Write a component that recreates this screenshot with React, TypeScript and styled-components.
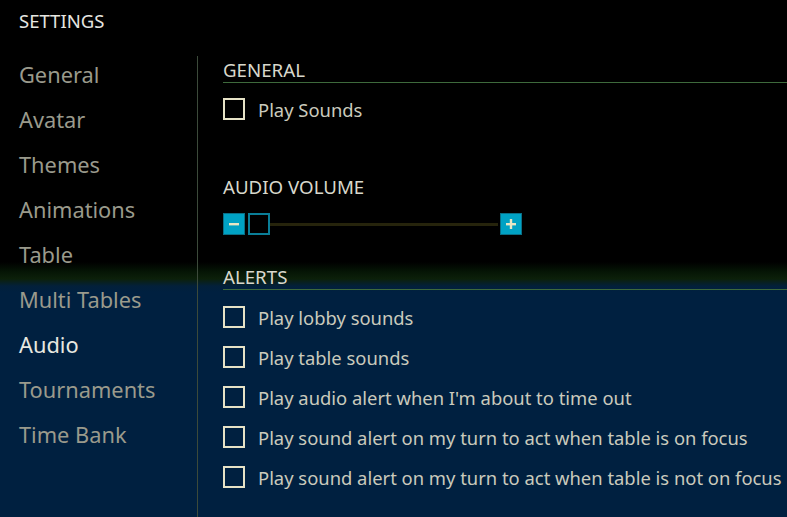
import React from "react";
import styled, { createGlobalStyle } from "styled-components";

const GlobalStyle = createGlobalStyle`
  html, body {
    margin: 0;
    padding: 0;
  }
  body {
    width: 787px;
    height: 517px;
    overflow: hidden;
    font-family: "Noto Sans", "Open Sans", sans-serif;
    background: linear-gradient(
      to bottom,
      #000000 0px,
      #000000 262px,
      #051405 271px,
      #0c200a 279px,
      #03203a 286px,
      #002040 292px,
      #002040 100%
    );
  }
`;

const Page = styled.div`
  display: flex;
  flex-direction: column;
  height: 517px;
`;

const Header = styled.div`
  height: 56px;
  padding: 9px 0 0 19px;
  box-sizing: border-box;
  color: #e6e6e0;
  font-size: 18.5px;
  line-height: 24px;
`;

const Body = styled.div`
  display: flex;
  flex: 1;
`;

const SidePanel = styled.nav`
  width: 197px;
  border-right: 1px solid #3c4a3a;
  display: flex;
  flex-direction: column;
`;

const NavItem = styled.div<{ $active?: boolean }>`
  height: 45px;
  line-height: 37px;
  padding-left: 19px;
  font-size: 21.8px;
  color: ${(p) => (p.$active ? "#e8e8e0" : "#9a9a8c")};
`;

const Content = styled.div`
  flex: 1;
  padding-left: 25px;
  display: flex;
  flex-direction: column;
`;

const SectionTitle = styled.div<{ $top: number; $line?: boolean }>`
  margin-top: ${(p) => p.$top}px;
  height: 24px;
  line-height: 24px;
  font-size: 18.7px;
  color: #d8d8cc;
  border-bottom: ${(p) => (p.$line ? "1px solid #3e6a3c" : "none")};
`;

const Row = styled.label`
  display: flex;
  align-items: center;
  height: 40px;
  gap: 13px;
  color: #cacabc;
  font-size: 18.4px;
`;

const Box = styled.span`
  width: 18px;
  height: 18px;
  border: 2px solid #e6e2c6;
  flex-shrink: 0;
`;

const List = styled.div<{ $top: number }>`
  margin-top: ${(p) => p.$top}px;
  display: flex;
  flex-direction: column;
`;

const Slider = styled.div`
  margin-top: 14px;
  display: flex;
  align-items: center;
  height: 22px;
`;

const StepButton = styled.div`
  width: 22px;
  height: 22px;
  box-sizing: border-box;
  background: #00a2c4;
  border: 1px solid #0a6f86;
  display: flex;
  align-items: center;
  justify-content: center;
`;

const Thumb = styled.div`
  width: 22px;
  height: 22px;
  box-sizing: border-box;
  margin-left: 3px;
  border: 2px solid #0a7e98;
  background: #000;
`;

const Track = styled.div`
  width: 228px;
  height: 3px;
  background: #26240c;
  margin-right: 2px;
`;

const Check = ({ label }: { label: string }) => (
  <Row>
    <Box />
    {label}
  </Row>
);

const navItems = [
  "General",
  "Avatar",
  "Themes",
  "Animations",
  "Table",
  "Multi Tables",
  "Audio",
  "Tournaments",
  "Time Bank",
];

const alerts = [
  "Play lobby sounds",
  "Play table sounds",
  "Play audio alert when I'm about to time out",
  "Play sound alert on my turn to act when table is on focus",
  "Play sound alert on my turn to act when table is not on focus",
];

export default function App() {
  return (
    <>
      <GlobalStyle />
      <Page>
        <Header>SETTINGS</Header>
        <Body>
          <SidePanel>
            {navItems.map((n) => (
              <NavItem key={n} $active={n === "Audio"}>
                {n}
              </NavItem>
            ))}
          </SidePanel>
          <Content>
            <SectionTitle $top={2} $line>
              GENERAL
            </SectionTitle>
            <List $top={6}>
              <Check label="Play Sounds" />
            </List>
            <SectionTitle $top={46}>AUDIO VOLUME</SectionTitle>
            <Slider>
              <StepButton>
                <svg width="10" height="10" viewBox="0 0 10 10">
                  <rect x="0" y="4" width="10" height="2.4" fill="#e8e6c4" />
                </svg>
              </StepButton>
              <Thumb />
              <Track />
              <StepButton>
                <svg width="10" height="10" viewBox="0 0 10 10">
                  <rect x="0" y="4" width="10" height="2.4" fill="#e8e6c4" />
                  <rect x="3.8" y="0" width="2.4" height="10" fill="#e8e6c4" />
                </svg>
              </StepButton>
            </Slider>
            <SectionTitle $top={30} $line>
              ALERTS
            </SectionTitle>
            <List $top={7}>
              {alerts.map((a) => (
                <Check key={a} label={a} />
              ))}
            </List>
          </Content>
        </Body>
      </Page>
    </>
  );
}
